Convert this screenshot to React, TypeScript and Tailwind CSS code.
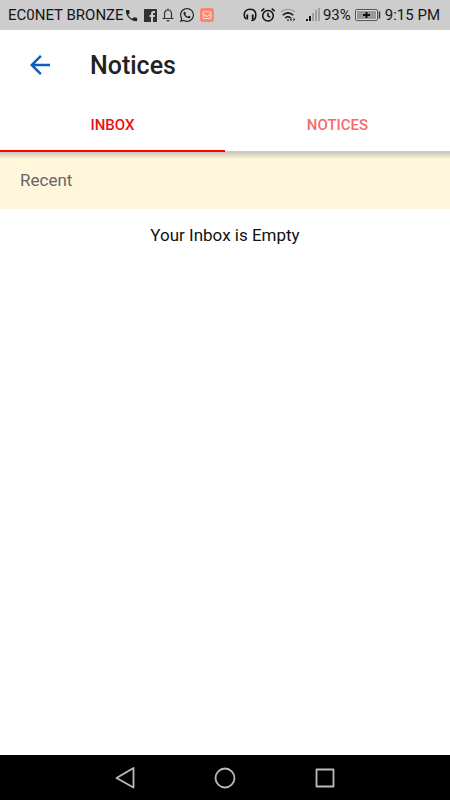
import { useState } from 'react';
import { FaWhatsapp } from 'react-icons/fa';
import { MdPhone, MdArrowBack } from 'react-icons/md';

function Bell() {
  return (
    <svg className="h-4 w-3" viewBox="0 0 12 16" fill="none" stroke="#333" strokeWidth="1.2" aria-hidden="true">
      <path d="M.5 11.500h11M2.500 11.500V7c0-2.300 1.400-4 3.500-4s3.500 1.700 3.500 4v4.500M6 3V1.500" />
      <path d="M4.700 13.700h2.600" strokeWidth="1.300" />
    </svg>
  );
}

function FacebookApp() {
  return (
    <svg className="size-[13px]" viewBox="0 0 13 13" aria-hidden="true">
      <rect width="13" height="13" rx=".5" fill="#333" />
      <path d="M7 13V8H5.500V6H7V4.700C7 3 8 2 9.700 2H11v2h-1c-.7 0-1 .3-1 1v1h2l-.3 2H9v5z" fill="#cdcdcd" />
    </svg>
  );
}

function InboxApp() {
  return (
    <svg className="size-3.5" viewBox="0 0 14 14" fill="none" aria-hidden="true">
      <rect width="14" height="14" rx="3" fill="#ff8470" />
      <rect x="3.2" y="3.7" width="7.6" height="6.8" rx="1.3" stroke="#ffd9d0" strokeWidth="1.1" />
      <path d="M3.500 7h1.700c.3 1 1 1.400 1.800 1.400s1.500-.4 1.800-1.400h1.700" stroke="#ffd9d0" strokeWidth="1.100" />
    </svg>
  );
}

function Headset() {
  return (
    <svg className="h-4 w-3.5" viewBox="0 0 14 16" fill="none" stroke="#111" strokeWidth="1.5" aria-hidden="true">
      <path d="M3 12C1.600 10.900 1.200 9.300 1.200 7.800 1.200 4.500 3.500 2.300 7 2.300s5.800 2.200 5.800 5.500c0 3.600-1.300 5.800-4.500 5.800" />
      <path d="M4.300 7.500v5M9.700 7.500v5" strokeWidth="1.800" />
    </svg>
  );
}

function Alarm() {
  return (
    <svg className="size-4" viewBox="0 0 16 16" fill="none" stroke="#111" strokeWidth="1.500" aria-hidden="true">
      <circle cx="8" cy="8.700" r="5.300" />
      <path d="M1.300 4.200 4.300 1.700M14.700 4.200 11.700 1.700M8 5.700v3.200l2.200 1.500" />
    </svg>
  );
}

function Wifi() {
  return (
    <svg className="size-4" viewBox="0 0 16 16" fill="none" aria-hidden="true">
      <path d="M1 5c4-3.500 10-3.500 14 0" stroke="#999" strokeWidth="1.400" />
      <path d="M2.700 8.200c3.200-2.800 7.400-2.800 10.600 0M5.200 11c1.800-1.500 3.800-1.500 5.600 0" stroke="#111" strokeWidth="1.500" />
      <path d="M6.700 12.500h2.600L8 14.300zM10 12.500l1.500-2v4zM15 12.500l-1.500-2v4z" fill="#111" />
    </svg>
  );
}

function Signal() {
  return (
    <svg className="h-4 w-[15px]" viewBox="0 0 15 16" aria-hidden="true">
      <path d="M0 12h2v2H0zM3 9h2v5H3z" fill="#111" />
      <path d="M6 6h2v8H6zM9 3h2v11H9zM12 1h2v13h-2z" fill="#a0a0a0" />
    </svg>
  );
}

function Battery() {
  return (
    <svg className="h-3 w-[26px]" viewBox="0 0 26 12" fill="none" aria-hidden="true">
      <rect x=".5" y=".5" width="22" height="11" rx="1.500" stroke="#555" fill="#ddd" />
      <rect x="2" y="2" width="19" height="8" fill="#999" />
      <path d="M11.500 3v6M8 6h7" stroke="#111" strokeWidth="2" />
      <path d="M24.500 2.500v7" stroke="#333" strokeWidth="1.500" />
    </svg>
  );
}

function StatusBar() {
  return (
    <div className="flex h-[30px] items-center justify-between bg-[#cdcdcd] pr-2.5 pl-2 text-[15px] whitespace-nowrap text-[#151515]">
      <div className="flex items-center gap-[5px]">
        <div className="flex items-center">
          <span>EC0NET BRONZE</span>
          <MdPhone className="size-[15px] text-[#222]" />
        </div>
        <FacebookApp />
        <Bell />
        <FaWhatsapp className="size-4 text-[#222]" />
        <InboxApp />
      </div>
      <div className="flex items-center">
        <Headset />
        <span className="ml-[3px]"><Alarm /></span>
        <span className="ml-1"><Wifi /></span>
        <span className="ml-2.5"><Signal /></span>
        <span className="ml-0.5">93%</span>
        <span className="ml-1"><Battery /></span>
        <span className="ml-1">9:15 PM</span>
      </div>
    </div>
  );
}

const tabs = ['INBOX', 'NOTICES'];

export default function App() {
  const [active, setActive] = useState(0);
  return (
    <div className="flex min-h-screen flex-col bg-white font-[Roboto,sans-serif] text-[#111]">
      <StatusBar />
      <header className="flex h-[70px] items-center pl-[25px]">
        <button type="button" aria-label="Back" className="text-[#0b5fc0]">
          <MdArrowBack className="size-[30px]" />
        </button>
        <h1 className="ml-[35px] pt-0.5 text-[25px] leading-8 font-medium text-[#222]">Notices</h1>
      </header>
      <div role="tablist" className="grid h-[53px] grid-cols-2 border-b-2 border-[#cbcbc4]">
        {tabs.map((tab, i) => (
          <button
            key={tab}
            type="button"
            role="tab"
            aria-selected={active === i}
            onClick={() => setActive(i)}
            className={
              active === i
                ? '-mb-px border-b-2 border-[#f00] text-[15px] font-medium text-[#f01010]'
                : '-mb-px border-b-2 border-transparent text-[15px] font-medium text-[#f66a6a]'
            }
          >
            {tab}
          </button>
        ))}
      </div>
      <main className="flex-1">
        <h2 className="flex h-14 items-center bg-[linear-gradient(to_bottom,#d3ccb4,#fff6dc_6px)] px-5 text-[17px] text-[#666]">Recent</h2>
        <p className="pt-3.5 text-center text-[17px] text-[#111]">Your Inbox is Empty</p>
      </main>
      <nav className="flex h-[45px] items-center justify-center gap-[76px] bg-black text-[#bbb]">
        <button type="button" aria-label="Back">
          <svg className="size-6" viewBox="0 0 24 24" fill="none" stroke="currentColor" strokeWidth="1.800" strokeLinejoin="round" aria-hidden="true">
            <path d="M20.500 2v19.500L3.500 12z" />
          </svg>
        </button>
        <button type="button" aria-label="Home">
          <svg className="size-6" viewBox="0 0 24 24" fill="none" stroke="currentColor" strokeWidth="1.800" aria-hidden="true">
            <circle cx="12" cy="12" r="9.500" />
          </svg>
        </button>
        <button type="button" aria-label="Recent apps">
          <svg className="size-6" viewBox="0 0 24 24" fill="none" stroke="currentColor" strokeWidth="1.800" strokeLinejoin="round" aria-hidden="true">
            <rect x="3.500" y="3.500" width="17" height="17" />
          </svg>
        </button>
      </nav>
    </div>
  );
}
